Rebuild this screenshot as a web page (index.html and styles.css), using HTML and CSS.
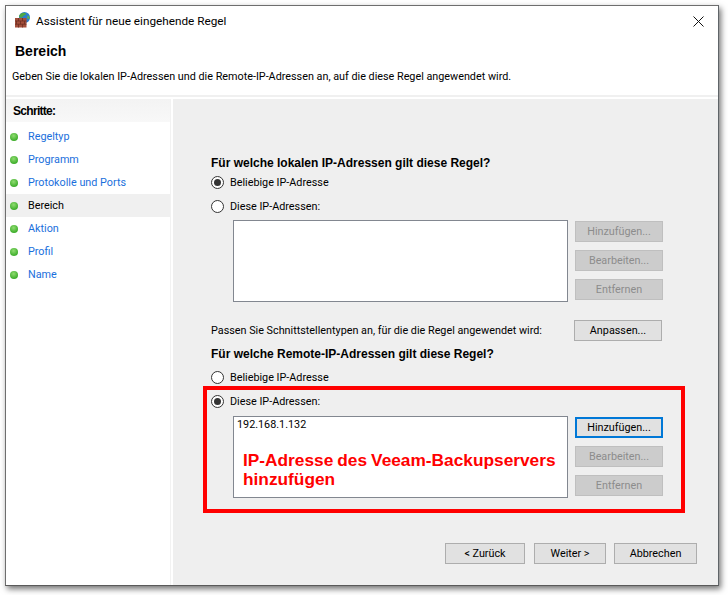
FILE: index.html
```html
<!DOCTYPE html>
<html lang="de">
<head>
<meta charset="utf-8">
<title>Assistent für neue eingehende Regel</title>
<link rel="stylesheet" href="styles.css">
</head>
<body>
<div class="window">
  <header class="titlebar">
    <svg class="app-icon" width="16" height="16" viewBox="0 0 16 16">
      <circle cx="9.500" cy="5.500" r="5.500" fill="#2a7fd0"/>
      <path d="M6 1.500c2-1.300 4-1 5 0 .5 1-1.500 1.500-2.500 2.500S7 6 5 5.500 4.500 2.500 6 1.500z" fill="#4fa845"/>
      <path d="M12.500 3.500c1.500 0 2.500 2 2.200 3.500L12 6.500z" fill="#5fb04e"/>
      <rect x="0" y="6" width="11.500" height="9.500" fill="#a34f3c"/>
      <path d="M0 9h11.500M0 12.200h11.500M3.500 6v3M7.500 6v3M1.500 9v3.200M5.500 9v3.200M9.500 9v3.200M3.500 12.200v3.300M7.500 12.200v3.300" stroke="#6e2e22" stroke-width=".8" fill="none"/>
    </svg>
    <span class="title">Assistent für neue eingehende Regel</span>
    <svg class="close" width="11" height="11" viewBox="0 0 11 11"><path d="M.5.5l10 10M10.500.5l-10 10" stroke="#111" stroke-width="1" fill="none"/></svg>
  </header>
  <div class="intro">
    <h1 class="page-title">Bereich</h1>
    <p class="page-desc">Geben Sie die lokalen IP-Adressen und die Remote-IP-Adressen an, auf die diese Regel angewendet wird.</p>
  </div>
  <div class="main">
    <nav class="steps">
      <div class="steps-head">Schritte:</div>
      <ul class="step-list">
        <li class="step"><span class="dot"></span>Regeltyp</li>
        <li class="step"><span class="dot"></span>Programm</li>
        <li class="step"><span class="dot"></span>Protokolle und Ports</li>
        <li class="step current"><span class="dot"></span>Bereich</li>
        <li class="step"><span class="dot"></span>Aktion</li>
        <li class="step"><span class="dot"></span>Profil</li>
        <li class="step"><span class="dot"></span>Name</li>
      </ul>
    </nav>
    <section class="content">
      <h2 class="q">Für welche lokalen IP-Adressen gilt diese Regel?</h2>
      <div class="radio-row"><span class="radio on"></span>Beliebige IP-Adresse</div>
      <div class="radio-row second"><span class="radio"></span>Diese IP-Adressen:</div>
      <div class="ip-block local">
        <div class="listbox"></div>
        <div class="side-btns">
          <button class="btn off">Hinzufügen...</button>
          <button class="btn off">Bearbeiten...</button>
          <button class="btn off">Entfernen</button>
        </div>
      </div>
      <div class="iface-row">
        <span>Passen Sie Schnittstellentypen an, für die die Regel angewendet wird:</span>
        <button class="btn">Anpassen...</button>
      </div>
      <h2 class="q q-remote">Für welche Remote-IP-Adressen gilt diese Regel?</h2>
      <div class="radio-row"><span class="radio"></span>Beliebige IP-Adresse</div>
      <div class="radio-row second"><span class="radio on"></span>Diese IP-Adressen:</div>
      <div class="ip-block remote">
        <div class="listbox tall">
          <div class="ip">192.168.1.132</div>
          <div class="note">IP-Adresse des Veeam-Backupservers hinzufügen</div>
        </div>
        <div class="side-btns">
          <button class="btn focus">Hinzufügen...</button>
          <button class="btn off">Bearbeiten...</button>
          <button class="btn off">Entfernen</button>
        </div>
      </div>
      <div class="footer">
        <button class="btn back">&lt; Zurück</button>
        <button class="btn next">Weiter &gt;</button>
        <button class="btn cancel">Abbrechen</button>
      </div>
      <div class="highlight"></div>
    </section>
  </div>
</div>
</body>
</html>
```
FILE: styles.css
```css
* { box-sizing: border-box; }
html, body { margin: 0; height: 100%; background: #fff; overflow: hidden; }
body { padding: 5px 0 0 5px; font: 10.8px Roboto, "Liberation Sans", sans-serif; color: #000; }
.window {
  width: 714px; height: 581px; background: #fff;
  border: 1px solid #6e6e6e; border-right-color: #5f6468; border-bottom-color: #5a5a5a;
  box-shadow: 2px 3px 6px rgba(0,0,0,.55);
  display: flex; flex-direction: column;
}
.titlebar { height: 30px; display: flex; align-items: center; padding: 0 14px 0 9px; flex: none; }
.app-icon { flex: none; margin-right: 5px; margin-top: -2px; }
.title { flex: 1; font-size: 11.75px; }
.close { flex: none; }
.intro { height: 61px; margin-bottom: 2px; flex: none; padding-left: 6px; border-bottom: 2px solid #f0f0f0; }
.page-title { margin: 6px 0 0 3px; font: 700 14px/18px "Liberation Sans", sans-serif; color: #000; }
.page-desc { margin: 9px 0 0; line-height: 16px; }
.main { flex: 1; display: flex; min-height: 0; }
.steps { width: 165px; flex: none; background: #fff; border-right: 1px solid #f2f2f2; }
.steps-head { height: 23px; padding: 4px 0 0 7px; font: 700 12px/16px "Liberation Sans", sans-serif; background: linear-gradient(#f3f3f3, #f8f8f8); letter-spacing: -.7px; color: #000; }
.step-list { list-style: none; margin: 3px 0 0; padding: 0; }
.step { height: 23px; display: flex; align-items: center; color: #1a6fdc; padding-left: 4px; }
.step.current { color: #000; background: #f0f0f0; }
.dot { width: 8px; height: 8px; border-radius: 50%; margin-right: 10px; background: radial-gradient(circle at 45% 35%, #8fdc70, #3fae2c 70%); }
.content { flex: 1; position: relative; background: #efefef; margin-left: 2px; padding: 56px 0 0 38px; }
.q { margin: 0; font: 700 12px/16px "Liberation Sans", sans-serif; color: #000; }
.radio-row { height: 23px; display: flex; align-items: center; }
.radio-row.second { margin-top: 1px; }
.radio { width: 13px; height: 13px; border: 1px solid #333; border-radius: 50%; background: #fff; margin-right: 6px; flex: none; }
.radio.on { display: flex; align-items: center; justify-content: center; }
.radio.on::after { content: ""; width: 7px; height: 7px; border-radius: 50%; background: #333; }
.ip-block { display: flex; margin-left: 22px; }
.ip-block.local { margin-top: 2px; }
.ip-block.remote { margin-top: 3px; }
.listbox { width: 335px; height: 82px; background: #fff; border: 1px solid #828790; }
.listbox.tall { padding: 0 0 0 3px; }
.ip { line-height: 16px; }
.note { margin: 18px 0 0 6px; width: 322px; font: 700 17.3px/19px "Liberation Sans", sans-serif; word-spacing: -.8px; color: #f00; }
.side-btns { display: flex; flex-direction: column; gap: 8px; margin-left: 7px; padding-top: 1px; }
.btn { width: 88px; height: 21px; padding: 0; background: #e1e1e1; border: 1px solid #adadad; font: 10.8px Roboto, "Liberation Sans", sans-serif; color: #000; }
.btn.off { background: #ccc; border-color: #bfbfbf; color: #8c8c8c; }
.btn.focus { border: 2px solid #0078d7; }
.iface-row { display: flex; align-items: center; justify-content: space-between; width: 451px; margin-top: 18px; }
.q-remote { margin: 5px 0 4px; }
.footer { position: absolute; left: 272px; top: 444px; display: flex; }
.back { width: 80px; margin-right: 9px; }
.next { width: 72px; margin-right: 8px; }
.cancel { width: 83px; }
.highlight { position: absolute; left: 30px; top: 287px; width: 482px; height: 127px; border: 4px solid #f00; pointer-events: none; }
```
